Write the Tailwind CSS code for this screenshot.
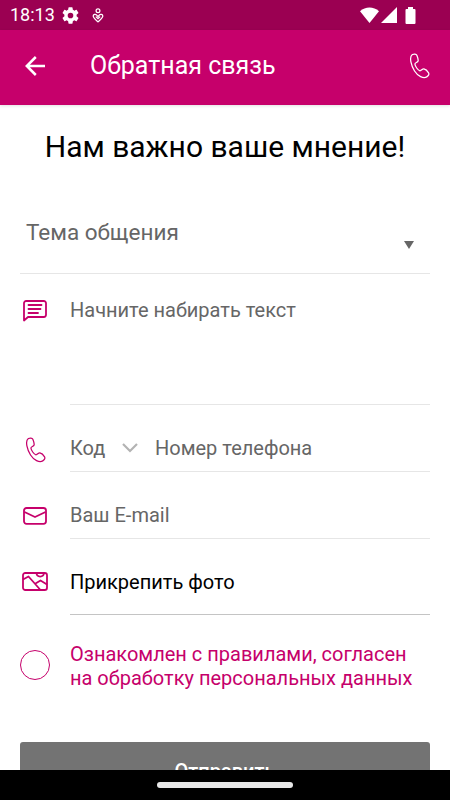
<!DOCTYPE html>
<html lang="ru">
<head>
<meta charset="utf-8">
<title>Обратная связь</title>
<script src="https://cdn.jsdelivr.net/npm/@tailwindcss/browser@4"></script>
</head>
<body class="bg-white">
<div class="w-[450px] h-[800px] flex flex-col overflow-hidden bg-white font-['Roboto',sans-serif] text-[20px] leading-6 text-[#666]">
  <div class="h-[30px] shrink-0 bg-[#9b0052] flex items-center text-white pl-[10px] pr-[34px]">
    <span class="text-[18px] w-[52px] whitespace-nowrap">18:13</span>
    <svg class="size-[17px]" viewBox="2 2 20 20" fill="currentColor"><path d="M19.14 12.94c.04-.3.06-.61.06-.94s-.02-.64-.07-.94l2.03-1.58a.5.5 0 0 0 .12-.61l-1.92-3.32a.49.49 0 0 0-.59-.22l-2.39.96a7 7 0 0 0-1.62-.94l-.36-2.54A.48.48 0 0 0 13.920 2.400h-3.840a.48.48 0 0 0-.48.41l-.36 2.54c-.59.24-1.130.57-1.620.94l-2.390-.96a.49.49 0 0 0-.59.22L2.740 8.870a.48.48 0 0 0 .12.61l2.030 1.580c-.05.3-.09.63-.09.94s.02.64.07.94l-2.030 1.580a.5.5 0 0 0-.12.61l1.920 3.320c.12.22.37.29.59.22l2.390-.96c.5.38 1.030.7 1.620.94l.36 2.540c.05.24.24.41.48.41h3.840c.24 0 .44-.17.47-.41l.36-2.540c.59-.24 1.130-.56 1.620-.94l2.390.96c.22.08.47 0 .59-.22l1.920-3.320a.5.5 0 0 0-.12-.61zM12 15.300a3.300 3.300 0 1 1 0-6.600 3.300 3.300 0 0 1 0 6.600z"/></svg>
    <svg class="w-3 h-[15px] ml-[13px]" viewBox="0 0 12 15" fill="none" stroke="currentColor" stroke-width="1.25"><circle cx="6" cy="2.700" r="1.900"/><path d="M6 8.700 4.700 7.100C3.500 5.700 1.200 6.300 1.200 8.100c0 2 3 4.100 4.800 5.700 1.800-1.600 4.800-3.700 4.800-5.700 0-1.800-2.300-2.400-3.500-1zM3.800 8.600 6 10.600l2.200-2"/></svg>
    <div class="ml-auto flex items-center">
      <svg class="w-[19px] h-[16px]" viewBox="0 0 19 16" fill="currentColor"><path d="M0 4.200C5.500-.7 13.500-.7 19 4.200L9.500 16z"/></svg>
      <svg class="w-4 h-4 ml-[2px]" viewBox="0 0 16 16" fill="currentColor"><path d="M16 0v16H0z"/></svg>
      <svg class="w-[11px] h-[17px] ml-[8px]" viewBox="0 0 11 17" fill="currentColor"><path d="M3 0h5v2h1.500A1 1 0 0 1 10.500 3v13a1 1 0 0 1-1 1h-8a1 1 0 0 1-1-1V3a1 1 0 0 1 1-1H3z"/></svg>
    </div>
  </div>
  <header class="h-[75px] shrink-0 bg-[#c6006b] flex items-center text-white pl-[25px] pr-5 pb-[3px] shadow-[0_1px_3px_rgba(0,0,0,.12)]">
    <svg class="size-5 mb-px" viewBox="0 0 20 20" fill="none" stroke="currentColor" stroke-width="2.500"><path d="M20 10H2M10.800 1 1.800 10l9 9"/></svg>
    <h1 class="ml-[45px] text-[25px] leading-[30px] whitespace-nowrap">Обратная связь</h1>
    <svg class="ml-auto w-[21px] h-[26px]" viewBox="0 0 22 27" fill="none" stroke="currentColor" stroke-width="1.300" stroke-linejoin="round"><path d="M3.500 1.500C5.200.7 7.500.6 8.200 2.200c.7 1.700 1.700 4.700 1.300 6.100-.4 1.500-3.200 1.700-3.300 3.100-.1 1.900 3.300 6.900 5.200 7.100 1.500.2 2.600-2.300 4.200-2 1.700.3 4.100 2.800 4.900 4.200.9 1.600-.4 3.400-1.900 4.200-3.600 2-9.400-.8-12.800-6.200C2.500 13.300-.3 4.200 3.500 1.500z"/></svg>
  </header>
  <main class="flex-1 min-h-0 overflow-hidden px-5 flex flex-col">
    <h2 class="h-[84px] shrink-0 flex items-center justify-center text-[30px] text-black whitespace-nowrap">Нам важно ваше мнение!</h2>
    <div class="h-[85px] shrink-0 border-b border-[#e6e6e6] flex items-center pl-[6px] pr-4">
      <span class="text-[22.500px] pt-[2px] whitespace-nowrap">Тема общения</span>
      <svg class="ml-auto mt-[27px] w-[10px] h-2" viewBox="0 0 10 8" fill="#666"><path d="M0 0h10L5 8z"/></svg>
    </div>
    <div class="flex shrink-0 h-[131px]">
      <div class="w-[50px] pt-[26px] pl-[3px]"><svg class="w-6 h-[22px]" viewBox="0 0 24 22" fill="none" stroke="#c6006b" stroke-width="1.800" stroke-linejoin="round" stroke-linecap="round"><path d="M1 20.500V3.200A2.200 2.200 0 0 1 3.200 1h17.600A2.200 2.200 0 0 1 23 3.200v11.600a2.200 2.200 0 0 1-2.200 2.200H5zM5.500 5h13M5.500 9h12M5.500 13h9.500"/></svg></div>
      <div class="flex-1 border-b border-[#e6e6e6] pt-6">Начните набирать текст</div>
    </div>
    <div class="flex shrink-0 h-[67px]">
      <div class="w-[50px] pt-8 pl-[5px]"><svg class="w-[21px] h-[26px]" viewBox="0 0 22 27" fill="none" stroke="#c6006b" stroke-width="1.300" stroke-linejoin="round"><path d="M3.500 1.500C5.200.7 7.500.6 8.200 2.200c.7 1.700 1.700 4.700 1.300 6.100-.4 1.500-3.200 1.700-3.300 3.100-.1 1.900 3.300 6.900 5.200 7.100 1.500.2 2.600-2.300 4.200-2 1.700.3 4.100 2.800 4.900 4.200.9 1.600-.4 3.400-1.900 4.200-3.600 2-9.400-.8-12.800-6.200C2.500 13.300-.3 4.200 3.500 1.500z"/></svg></div>
      <div class="flex-1 border-b border-[#e6e6e6] pt-[31px] flex items-start">
        <span class="w-[52px]">Код</span>
        <svg class="w-4 h-[10px] mt-[7px]" viewBox="0 0 16 10" fill="none" stroke="#b3b3b3" stroke-width="2.200"><path d="m1 1 7 7 7-7"/></svg>
        <span class="ml-[17px]">Номер телефона</span>
      </div>
    </div>
    <div class="flex shrink-0 h-[67px]">
      <div class="w-[50px] pt-[35px] pl-[3px]"><svg class="w-6 h-[18px]" viewBox="0 0 24 18" fill="none" stroke="#c6006b" stroke-width="1.800" stroke-linejoin="round"><rect x="1" y="1" width="22" height="15.800" rx="2.500"/><path d="m1.500 5 10.500 5L22.500 5"/></svg></div>
      <div class="flex-1 border-b border-[#e6e6e6] pt-[31px]">Ваш E-mail</div>
    </div>
    <div class="flex shrink-0 h-[76px]">
      <div class="w-[50px] pt-[33px] pl-[2px]"><svg class="w-[26px] h-[19px]" viewBox="0 0 26 19" fill="none" stroke="#c6006b" stroke-width="1.800" stroke-linejoin="round"><rect x="1" y="1" width="24" height="17" rx="2.300"/><path d="m1 7.500 5.500-3L18.500 18M13.500 11.500l5-3L25 12.500M14.500 1c.3 4.700 7 4.700 7.500 0"/></svg></div>
      <div class="flex-1 border-b border-[#c4c4c4] pt-[31px] text-black">Прикрепить фото</div>
    </div>
    <div class="flex shrink-0 h-[127px] text-[#c6006b]">
      <div class="w-[50px] pt-[35px]"><div class="size-[30px] rounded-full border border-[#c6006b]"></div></div>
      <p class="pt-7 leading-[23.500px] whitespace-nowrap">Ознакомлен с правилами, согласен<br>на обработку персональных данных</p>
    </div>
    <button class="h-[60px] shrink-0 rounded-[3px] bg-[#737373] text-white text-[20px] font-medium pb-[3px]">Отправить</button>
  </main>
  <div class="h-[30px] shrink-0 bg-black flex items-center justify-center"><div class="w-[136px] h-[6px] rounded-full bg-[#e8e8e8]"></div></div>
</div>
</body>
</html>
